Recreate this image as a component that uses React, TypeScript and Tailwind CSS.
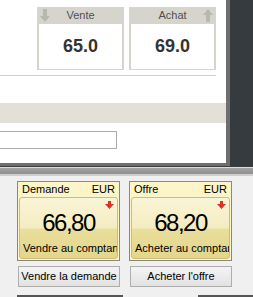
import React from 'react';

function GrayArrow({ up }: { up?: boolean }) {
  return (
    <svg width="10" height="13" viewBox="0 0 10 13" className="block">
      <path
        d={up ? 'M5 0 L10 6 L7 6 L7 13 L3 13 L3 6 L0 6 Z' : 'M3 0 L7 0 L7 7 L10 7 L5 13 L0 7 L3 7 Z'}
        fill="#b8b8b0"
      />
    </svg>
  );
}

function RedArrow() {
  return (
    <svg width="9" height="8" viewBox="0 0 9 8" className="block">
      <path d="M3 0 L6 0 L6 3 L9 3 L4.5 8 L0 3 L3 3 Z" fill="#e0302a" />
    </svg>
  );
}

function PriceBox({ label, value, arrow }: { label: string; value: string; arrow: 'up' | 'down' }) {
  return (
    <div className="w-[87px] h-[63px] bg-[#d5d5cd] px-[2px] pb-[1px] flex flex-col">
      <div className="h-[17px] relative flex items-center justify-center text-[11px] text-[#505050]">
        {arrow === 'down' && (
          <div className="absolute left-[1px] top-[2px]">
            <GrayArrow />
          </div>
        )}
        {arrow === 'up' && (
          <div className="absolute right-[1px] top-[2px]">
            <GrayArrow up />
          </div>
        )}
        <span>{label}</span>
      </div>
      <div className="flex-1 bg-white flex items-center justify-center text-[18px] font-bold text-[#333]">
        {value}
      </div>
    </div>
  );
}

function QuoteCard({ title, value, action }: { title: string; value: string; action: string }) {
  return (
    <div className="w-[103px] h-[80px] border border-[#8a8a7a] bg-[#fcf5c8] flex flex-col">
      <div className="h-[15px] flex justify-between items-center px-[4px] text-[11px] text-black leading-none">
        <span>{title}</span>
        <span>EUR</span>
      </div>
      <div className="mx-[1px] mb-[1px] flex-1 rounded-[3px] border border-[#cdbd78] overflow-hidden flex flex-col relative bg-[linear-gradient(to_bottom,#faf5d8_0%,#f4ecc0_50%,#e9de9c_52%,#e3d68c_100%)]">
        <div className="absolute right-[3px] top-[3px]">
          <RedArrow />
        </div>
        <div className="mt-[13px] text-center text-[24px] tracking-[-1.5px] leading-none text-black">
          {value}
        </div>
        <div className="mt-auto pl-[3px] pb-[4px] text-[11px] text-black whitespace-nowrap leading-none">
          {action}
        </div>
      </div>
    </div>
  );
}

export default function App() {
  return (
    <div className="w-[253px] h-[297px] overflow-hidden flex flex-col bg-[#f0f0f0] font-['Liberation_Sans',Arial,sans-serif]">
      <div className="h-[166px] flex shrink-0">
        <div className="w-[230px] bg-white border-r-4 border-b-[3px] border-[#6e6e6e] flex flex-col">
          <div className="pt-[7px] pl-[37px] flex gap-[5px]">
            <PriceBox label="Vente" value="65.0" arrow="down" />
            <PriceBox label="Achat" value="69.0" arrow="up" />
          </div>
          <div className="mt-[5px] w-[216px] h-px bg-[#cfcfcf]" />
          <div className="mt-[27px] h-[20px] bg-[#e3e0d8]" />
          <div className="mt-[8px] w-[117px] h-[18px] border border-[#ababab] border-l-0 bg-white" />
        </div>
        <div className="flex-1 bg-[#353b3e]" />
      </div>
      <div className="h-px bg-[#3e3e3e]" />
      <div className="h-px bg-[#dcdcdc]" />
      <div className="h-[6px] bg-gradient-to-b from-[#a3a3a3] to-[#8f8f8f]" />
      <div className="h-[2px] bg-[#cfcfcf]" />
      <div className="flex-1 flex flex-col">
        <div className="mt-[5px] pl-[17px] flex gap-[9px]">
          <QuoteCard title="Demande" value="66,80" action="Vendre au comptant" />
          <QuoteCard title="Offre" value="68,20" action="Acheter au comptant" />
        </div>
        <div className="mt-[5px] pl-[18px] flex gap-[10px]">
          <button className="w-[102px] h-[21px] border border-[#adadad] bg-gradient-to-b from-[#f4f4f4] to-[#e2e2e2] text-[11px] text-black whitespace-nowrap">
            Vendre la demande
          </button>
          <button className="w-[102px] h-[21px] border border-[#adadad] bg-gradient-to-b from-[#f4f4f4] to-[#e2e2e2] text-[11px] text-black whitespace-nowrap">
            Acheter l'offre
          </button>
        </div>
        <div className="mt-[8px] flex">
          <div className="ml-[17px] w-[106px] h-[2px] bg-[#555]" />
          <div className="ml-[75px] flex-1 h-[2px] bg-[#555]" />
        </div>
      </div>
    </div>
  );
}
